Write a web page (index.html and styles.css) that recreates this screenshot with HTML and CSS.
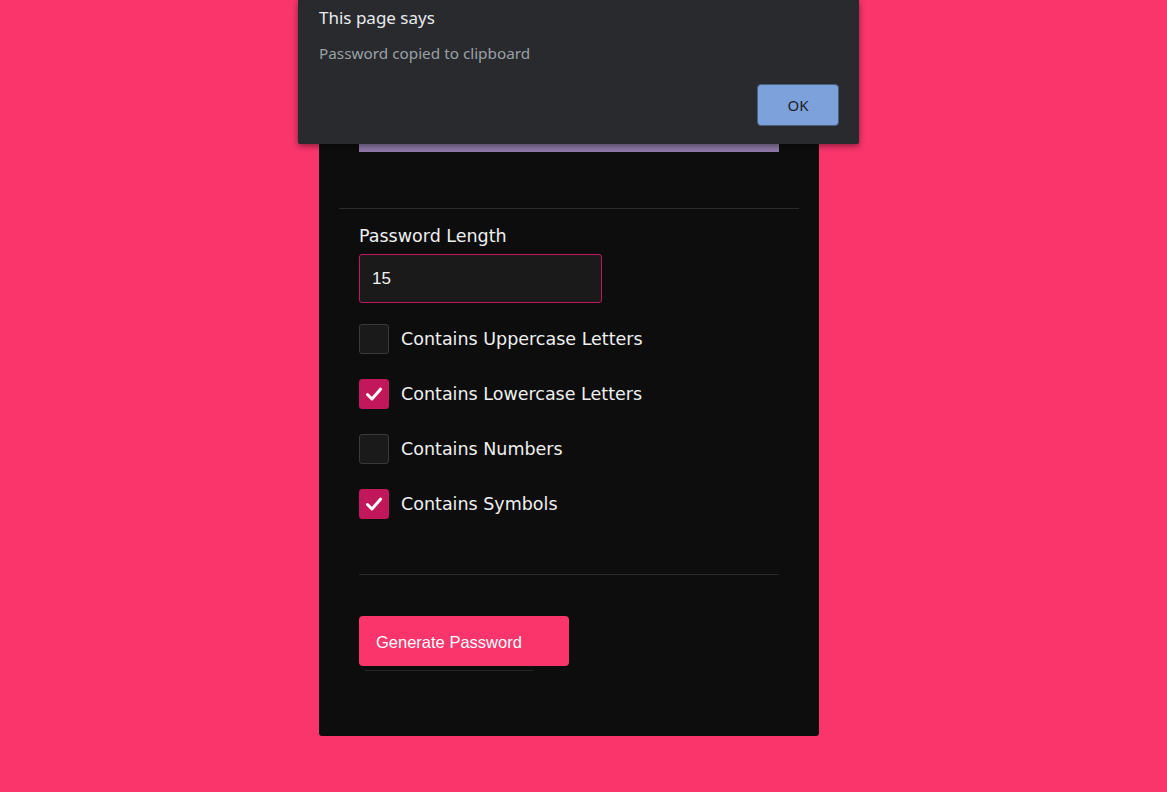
FILE: index.html
```html
<!DOCTYPE html>
<html>
<head>
<meta charset="utf-8">
<link rel="stylesheet" href="styles.css">
</head>
<body>
<main class="card">
  <section class="top">
    <div class="result"></div>
  </section>
  <hr class="sep">
  <section class="settings">
    <label class="field-label">Password Length</label>
    <input class="length" type="text" value="15">
    <ul class="options">
      <li class="option"><span class="box"></span><span>Contains Uppercase Letters</span></li>
      <li class="option"><span class="box checked"><svg viewBox="0 0 30 30"><path d="M8 15.5 L12.8 20.3 L22 9.8"/></svg></span><span>Contains Lowercase Letters</span></li>
      <li class="option"><span class="box"></span><span>Contains Numbers</span></li>
      <li class="option"><span class="box checked"><svg viewBox="0 0 30 30"><path d="M8 15.5 L12.8 20.3 L22 9.8"/></svg></span><span>Contains Symbols</span></li>
    </ul>
    <hr class="sep2">
    <button class="generate">Generate Password</button>
    <div class="under"></div>
  </section>
</main>

<div class="dialog">
  <div class="d-title">This page says</div>
  <div class="d-msg">Password copied to clipboard</div>
  <div class="d-actions"><button class="ok">OK</button></div>
</div>
</body>
</html>
```
FILE: styles.css
```css
* { box-sizing: border-box; }
html, body { margin: 0; padding: 0; }
body {
  background: #f9356c;
  min-height: 792px;
  padding-left: 319px;
  font-family: "DejaVu Sans", sans-serif;
}
.card {
  width: 500px;
  background: #0d0d0d;
  padding: 0 40px 65px;
  border-radius: 0 0 3px 3px;
}
.top { padding-top: 102px; }
.result { height: 50px; background: #8f7aa8; }
.sep {
  margin: 56px -20px 0;
  border: 0;
  height: 1px;
  background: #2b2b2b;
}
.settings { padding-top: 15px; }
.field-label {
  display: block;
  color: #f0f0f0;
  font-size: 17.5px;
  line-height: 24px;
  height: 24px;
}
.length {
  display: block;
  margin-top: 6px;
  width: 243px;
  height: 49px;
  background: #1a1a1a;
  border: 1px solid #c2185b;
  border-radius: 3px;
  color: #f2f2f2;
  font-family: "Liberation Sans", Arial, sans-serif;
  font-size: 17px;
  padding: 0 12px;
  outline: none;
}
.options {
  list-style: none;
  margin: 21px 0 0;
  padding: 0;
  display: flex;
  flex-direction: column;
  gap: 25px;
}
.option {
  display: flex;
  align-items: center;
  gap: 12px;
  height: 30px;
  color: #f0f0f0;
  font-size: 17.5px;
}
.box {
  width: 30px;
  height: 30px;
  flex: none;
  border-radius: 3px;
  background: #1a1a1a;
  border: 1px solid #3a3a3a;
  display: flex;
}
.box.checked { background: #c2185b; border-color: #c2185b; }
.box svg { width: 28px; height: 28px; }
.box path { fill: none; stroke: #fff; stroke-width: 3.2; stroke-linecap: round; stroke-linejoin: round; }
.sep2 {
  margin: 55px 0 0;
  border: 0;
  height: 1px;
  background: #2b2b2b;
}
.generate {
  display: block;
  margin-top: 41px;
  width: 210px;
  height: 50px;
  background: #f9356c;
  border: 0;
  border-radius: 4px;
  color: #fff;
  font-family: "Liberation Sans", Arial, sans-serif;
  font-size: 16.5px;
  text-align: left;
  padding: 2px 17px 0;
}
.under {
  margin: 4px 0 0 6px;
  width: 168px;
  height: 1px;
  background: #262626;
}
.dialog {
  position: absolute;
  top: 0;
  left: 298px;
  width: 561px;
  height: 144px;
  background: #292a2d;
  box-shadow: 0 2px 6px rgba(0,0,0,0.45);
  border-radius: 0 0 2px 2px;
  padding: 7px 20px 0 21px;
  font-family: "Noto Sans", sans-serif;
}
.d-title { color: #e8eaed; font-size: 17px; line-height: 22px; }
.d-msg { color: #9aa0a6; font-size: 15.3px; line-height: 20px; margin-top: 14px; }
.d-actions { display: flex; justify-content: flex-end; margin-top: 21px; }
.ok {
  width: 82px;
  height: 42px;
  background: #7ca1db;
  border: 1px solid #4a5d80;
  border-radius: 4px;
  color: #202124;
  font-family: "Noto Sans", sans-serif;
  font-size: 15px;
}
```
